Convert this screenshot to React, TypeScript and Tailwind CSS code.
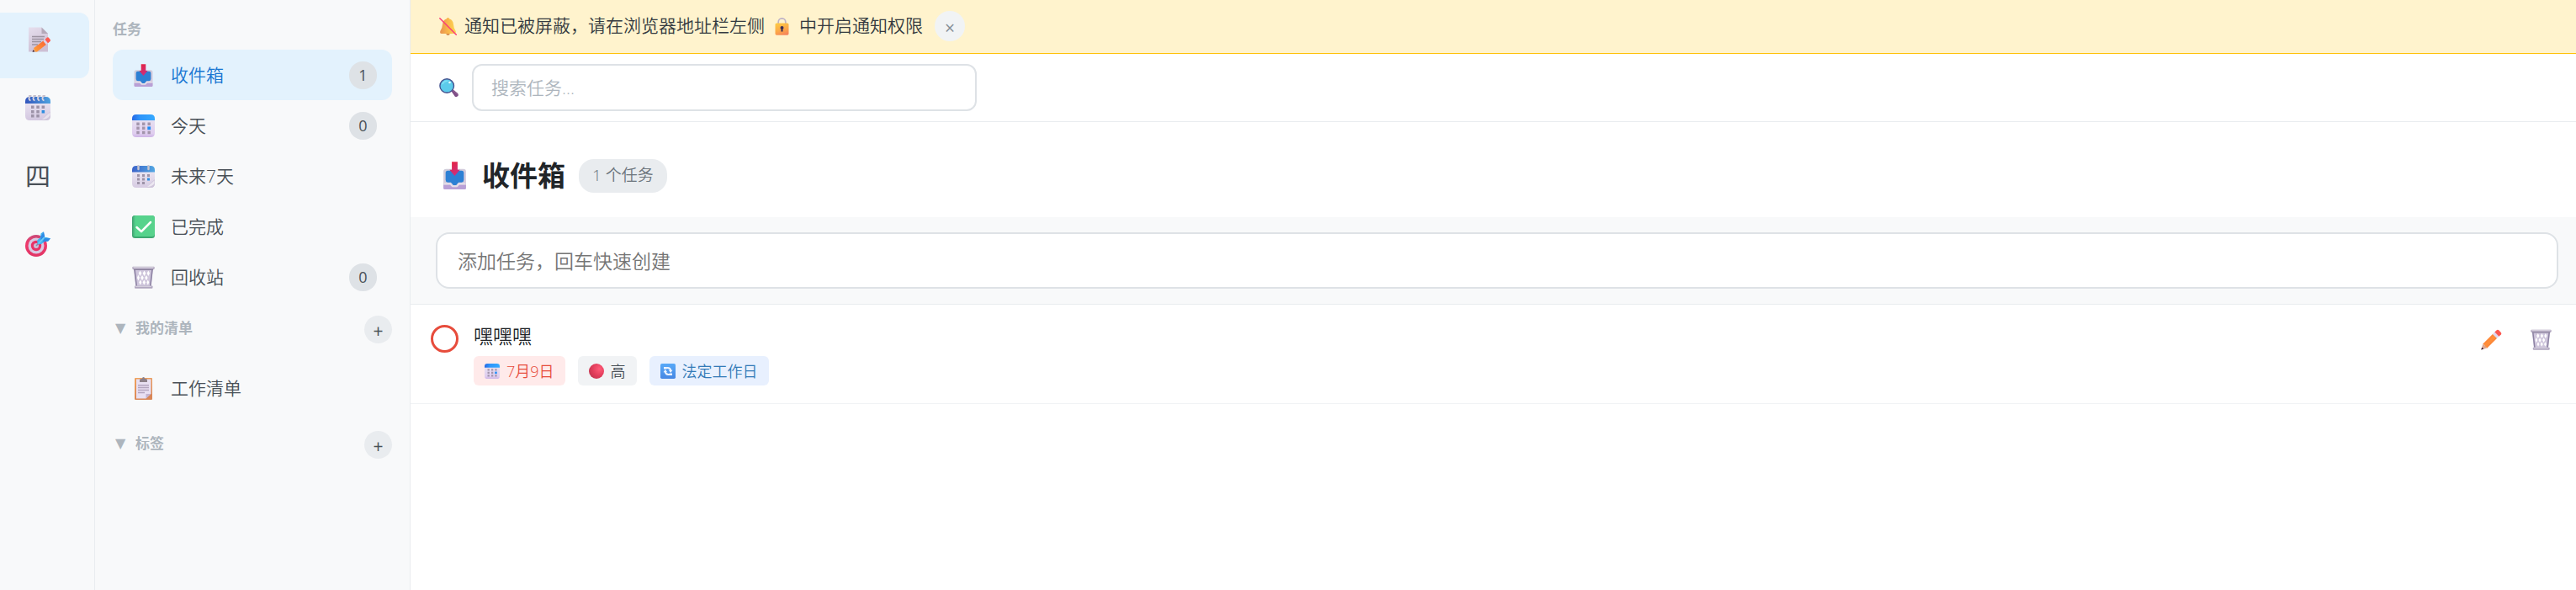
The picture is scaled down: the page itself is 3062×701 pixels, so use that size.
import clsx from "clsx";
import { useState } from "react";

type IconProps = { className?: string };

const MemoIcon = ({ className }: IconProps) => (
  <svg viewBox="0 0 30 30" className={className} aria-hidden="true">
    <defs>
      <linearGradient id="memoPaper" x1="0" y1="0" x2="0.4" y2="1">
        <stop offset="0" stopColor="#e6dfee" />
        <stop offset="1" stopColor="#cdbfd4" />
      </linearGradient>
      <linearGradient id="memoPencil" x1="0" y1="1" x2="1" y2="0">
        <stop offset="0" stopColor="#ffa23a" />
        <stop offset="1" stopColor="#f96234" />
      </linearGradient>
    </defs>
    <path d="M4 .5h15.500l7.500 7.500v21.500H4z" fill="url(#memoPaper)" />
    <path d="M19.500.5 27 8h-7.500z" fill="#b4a9b9" />
    <path
      d="M8 11.500h15M8 14.500h14M8 17.500h11M8 21h7"
      stroke="#9c93a1"
      strokeWidth="1.300"
    />
    <path d="m9 29.500 1.500-5 4 4.800z" fill="#e9b08c" />
    <path d="m8.500 29.700.8-2.400 2.200 2z" fill="#3a2a3c" />
    <path d="m10.200 25 11.600-8.700 3.400 4.400-11.200 8.800h-2z" fill="url(#memoPencil)" />
    <path d="m21.300 16.700 2.300-1.700 3.400 4.300-2.200 1.800z" fill="#dcd3e8" />
    <path
      d="m23.500 15 2.200-2.300q1.500-1 2.800.7l1.200 1.600q.8 1.500-.6 2.500L27 19.300z"
      fill="#ff5a4f"
    />
  </svg>
);

const SpiralCalendarIcon = ({ className }: IconProps) => (
  <svg viewBox="0 0 30 30" className={className} aria-hidden="true">
    <defs>
      <linearGradient id="spiralTop" x1="0" y1="0" x2="1" y2="0">
        <stop offset="0" stopColor="#3356bd" />
        <stop offset="1" stopColor="#4fa3e0" />
      </linearGradient>
      <linearGradient id="spiralPage" x1="0" y1="0" x2="0" y2="1">
        <stop offset="0" stopColor="#e9e3f1" />
        <stop offset="1" stopColor="#d3c7e0" />
      </linearGradient>
    </defs>
    <path d="M0 8h30v16.500q0 5.500-5.500 5.500h-19Q0 30 0 24.500z" fill="url(#spiralPage)" />
    <path d="M0 10V7.500Q0 2 5.500 2h19Q30 2 30 7.500V10z" fill="url(#spiralTop)" />
    <path
      d="M6.500 6.500C3.500 5.500 4 1 7 1M11.500 6.500C8.500 5.500 9 1 12 1M17 6.500C14 5.500 14.500 1 17.500 1M22.500 6.500C19.500 5.500 20 1 23 1"
      fill="none"
      stroke="#d9d3df"
      strokeWidth="1.800"
    />
    <path d="M4 .8h22" stroke="#bdb7c4" strokeWidth="1.200" strokeDasharray="3.500 2" />
    <path
      d="M7 12.500h3.500V16H7zM13.300 12.500h3.500V16h-3.500zM19.600 12.500h3.500V16h-3.500zM7 18h3.500v3.500H7zM13.300 18h3.500v3.500h-3.500zM7 23h3.500v3.500H7zM13.300 23h3.500v3.500h-3.500z"
      fill="#9d93a8"
    />
    <path d="M19.600 18h3.500v3.500h-3.500z" fill="#2f8de0" />
    <path d="M30 19.500v5q0 5.500-5.500 5.500H19q2.500-1 3.500-4z" fill="#cfc5da" />
    <path d="m20 29 9.500-8.500V24q-3 5-9.500 5z" fill="#e8e2ee" />
  </svg>
);

const TearCalendarIcon = ({ className }: IconProps) => (
  <svg viewBox="0 0 27 27" className={className} aria-hidden="true">
    <defs>
      <linearGradient id="tearTop" x1="0" y1="0" x2="1" y2="0">
        <stop offset="0" stopColor="#3b62c8" />
        <stop offset="1" stopColor="#52a7e2" />
      </linearGradient>
      <linearGradient id="tearPage" x1="0" y1="0" x2="0" y2="1">
        <stop offset="0" stopColor="#ebe6f2" />
        <stop offset="1" stopColor="#d6cbe2" />
      </linearGradient>
    </defs>
    <path d="M0 7h27v15q0 5-5 5H5q-5 0-5-5z" fill="url(#tearPage)" />
    <path d="M0 8.500V6q0-5 5-5h17q5 0 5 5v2.500z" fill="url(#tearTop)" />
    <path d="M7.500 1v4M19.500 1v4" stroke="#c9c6cf" strokeWidth="2.400" strokeLinecap="round" />
    <path
      d="M6 11h3v3H6zM12 11h3v3h-3zM18 11h3v3h-3zM6 15.500h3v3H6zM12 15.500h3v3h-3zM6 20h3v3H6zM12 20h3v3h-3z"
      fill="#9d93a8"
    />
    <path d="M18 15.500h3v3h-3z" fill="#2f8de0" />
    <path d="M27 17v5q0 5-5 5h-5q2.500-1 3.500-4z" fill="#cfc5da" />
    <path d="m18 26 8.500-7.500V22q-3 4-8.500 4z" fill="#ece7f1" />
  </svg>
);

const CalendarIcon = ({ className }: IconProps) => (
  <svg viewBox="0 0 27 27" className={className} aria-hidden="true">
    <defs>
      <linearGradient id="calTop" x1="0" y1="0" x2="1" y2="0">
        <stop offset="0" stopColor="#2668e4" />
        <stop offset="0.350" stopColor="#2e95fa" />
        <stop offset="1" stopColor="#35a9ff" />
      </linearGradient>
      <linearGradient id="calPage" x1="0" y1="0" x2="0" y2="1">
        <stop offset="0" stopColor="#e7e0f0" />
        <stop offset="0.800" stopColor="#dfcdef" />
        <stop offset="1" stopColor="#cdb3e6" />
      </linearGradient>
    </defs>
    <path d="M0 6h27v16q0 5-5 5H5q-5 0-5-5z" fill="url(#calPage)" />
    <path d="M0 7V5q0-5 5-5h17q5 0 5 5v2z" fill="url(#calTop)" />
    <path
      d="M5.300 9.500h3.400v3.400H5.300zM12 9.500h3.400v3.400H12zM18.500 9.500h3.400v3.400h-3.400zM5.300 14.500h3.400v3.400H5.300zM12 14.500h3.400v3.400H12zM5.300 19.800h3.400v3.400H5.300zM12 19.800h3.400v3.400H12zM18.500 19.800h3.400v3.400h-3.400z"
      fill="#a294ab"
    />
    <path d="M18.300 14.400h3.800v3.800h-3.800z" fill="#1f8cf5" />
  </svg>
);

const TargetIcon = ({ className }: IconProps) => (
  <svg viewBox="0 0 30 30" className={className} aria-hidden="true">
    <defs>
      <linearGradient id="targetRing" x1="0" y1="0" x2="0" y2="1">
        <stop offset="0" stopColor="#c94a78" />
        <stop offset="0.400" stopColor="#f03a6c" />
        <stop offset="1" stopColor="#e03565" />
      </linearGradient>
    </defs>
    <circle cx="13" cy="17" r="13" fill="url(#targetRing)" />
    <circle cx="13" cy="17" r="9.500" fill="#d9c9e2" />
    <circle cx="13" cy="17" r="6.200" fill="#e83266" />
    <circle cx="13" cy="17" r="3" fill="#c9bfd8" />
    <path d="m13 17 8-8" stroke="#8c84a5" strokeWidth="1.500" />
    <path
      d="m14.500 15.500-.3-5L18 7l.5-4.500L21.500.3l1 4.200.5 2.200 2.500.3 4.500 1.200-2.300 3-4.500.8-4 3z"
      fill="#45b3ee"
    />
    <path d="M18.200 6.800 22 .3l1.200 5.500-4.500 5zM23 8l7 .2-3 3.600-6.500.5z" fill="#2d8be6" />
    <path d="m15.500 14.500 7-7.300" stroke="#6ccaf7" strokeWidth="1.600" />
  </svg>
);

const InboxTrayIcon = ({ className }: IconProps) => (
  <svg viewBox="0 0 32 32" className={className} aria-hidden="true">
    <defs>
      <linearGradient id="trayArrow" x1="0" y1="0" x2="0.600" y2="1">
        <stop offset="0" stopColor="#e8213a" />
        <stop offset="1" stopColor="#cc2f80" />
      </linearGradient>
      <linearGradient id="trayBody" x1="0" y1="0" x2="1" y2="1">
        <stop offset="0" stopColor="#cfcdda" />
        <stop offset="1" stopColor="#d5c8de" />
      </linearGradient>
    </defs>
    <path d="M6 8.500h20q3 0 3 3V30q0 2-2 2H5q-2 0-2-2V11.500q0-3 3-3z" fill="url(#trayBody)" />
    <path d="M3 27h8l2.500 2.500h5L21 27h8v3.500q0 1.500-1.500 1.500h-23Q3 32 3 30.500z" fill="#b9a0d6" />
    <path
      d="M8 10.500h16q2.500 0 2.500 2.500v8q0 2.500-2.500 3h-3.500l-1.500 1.500q-.5 2-3 2t-3-2L11.500 24H8q-2.500-.5-2.500-3v-8q0-2.500 2.500-2.500z"
      fill="#2d80d4"
    />
    <path d="M4 25.500h7l2.200 2.700h5.600l2.200-2.700h7" fill="none" stroke="#e5deea" strokeWidth="1.800" />
    <path d="M12.700.3h6.600v9.200H22L16 16.500 10 9.500h2.700z" fill="url(#trayArrow)" />
  </svg>
);

const CheckMarkIcon = ({ className }: IconProps) => (
  <svg viewBox="0 0 27 27" className={className} aria-hidden="true">
    <defs>
      <linearGradient id="checkFill" x1="0" y1="0" x2="1" y2="0">
        <stop offset="0" stopColor="#3f9d70" />
        <stop offset="0.150" stopColor="#55d38c" />
        <stop offset="1" stopColor="#58d28c" />
      </linearGradient>
    </defs>
    <rect width="27" height="27" rx="3.500" fill="#3ea871" />
    <rect width="27" height="25" rx="3.500" fill="url(#checkFill)" />
    <path d="m5.500 14 5.500 5.200L22 8" fill="none" stroke="#fff" strokeWidth="2.500" strokeLinecap="round" strokeLinejoin="round" />
  </svg>
);

const TrashIcon = ({ className }: IconProps) => (
  <svg viewBox="0 0 27 27" className={className} aria-hidden="true">
    <path d="M2 4h23l-2.300 20.500H4.300z" fill="#cfc6dc" />
    <path
      d="m9.500 5.500 1.800 3.200-1.800 3.200-1.800-3.200zM14.500 5.500l1.800 3.200-1.800 3.200-1.800-3.200zM19.300 5.500 21 8.700l-1.700 3.200-1.700-3.200zM7.200 10.500 9 14l-1.700 3.500L6 14zM12 11l1.800 3-1.800 3.200-1.800-3.200zM16.900 11l1.700 3-1.700 3.200-1.700-3.200zM9.800 16.500l1.500 3-1.500 3-1.600-3zM14.300 16.500l1.700 3-1.700 3-1.700-3zM18.800 16.500l1.500 3-1.500 3-1.500-3z"
      fill="#fff"
    />
    <path d="m3 4 2.300 20M24 4l-2.300 20" stroke="#8d83a3" strokeWidth="1.600" />
    <path d="M1 .8h25q1 .7.800 2L26 4.300H1L.2 2.800Q0 1.500 1 .8z" fill="#b5abc2" />
    <path d="M1.500 1.500h24" stroke="#d8d3df" strokeWidth="1.200" />
    <path d="M2 4.500h23" stroke="#857b97" strokeWidth="1" />
    <rect x="3" y="23.500" width="21.500" height="3.200" rx="1" fill="#b0a6bf" />
    <path d="M4 24.300h19" stroke="#ded9e4" strokeWidth="1" />
  </svg>
);

const ClipboardIcon = ({ className }: IconProps) => (
  <svg viewBox="0 0 27 27" className={className} aria-hidden="true">
    <defs>
      <linearGradient id="clipBoard" x1="0" y1="0" x2="0.300" y2="1">
        <stop offset="0" stopColor="#f0a35e" />
        <stop offset="1" stopColor="#d98656" />
      </linearGradient>
    </defs>
    <rect x="3" y="1" width="21" height="26" rx="1" fill="url(#clipBoard)" />
    <path d="M5 2.500h17.500v17l-6 6H5z" fill="#e8dff2" />
    <path d="M16.500 20h6l-6 5.500z" fill="#c3b3cf" />
    <path d="M7 9.800h13M7 12.500h13M7 15.500h13M7 18.500h8" stroke="#b3a5bf" strokeWidth="1.400" />
    <path d="M9 6V3.500Q9 2 11 2h1q0-2 1.600-2T15 2h1q2 0 2 1.500V6z" fill="#8c8089" />
  </svg>
);

const BellOffIcon = ({ className }: IconProps) => (
  <svg viewBox="0 0 21 21" className={className} aria-hidden="true">
    <defs>
      <linearGradient id="bellFill" x1="0" y1="0" x2="1" y2="0">
        <stop offset="0" stopColor="#e8924f" />
        <stop offset="0.500" stopColor="#f9b64a" />
        <stop offset="1" stopColor="#fdd755" />
      </linearGradient>
    </defs>
    <circle cx="10.500" cy="18.800" r="2.200" fill="#d58a4c" />
    <path
      d="M10.500 0q1.600 0 1.800 1.500 4.200 1.200 4.700 6.500.2 4.500 2.700 8 .8 3-1.700 3H3q-2.500 0-1.700-3Q3.800 12.500 4 8q.5-5.300 4.700-6.500Q8.900 0 10.500 0z"
      fill="url(#bellFill)"
    />
    <path d="M.8.8 20.300 20.300" stroke="#fb3d78" strokeWidth="1.500" strokeLinecap="round" />
  </svg>
);

const LockIcon = ({ className }: IconProps) => (
  <svg viewBox="0 0 21 21" className={className} aria-hidden="true">
    <defs>
      <linearGradient id="lockFill" x1="0.300" y1="0" x2="0.700" y2="1">
        <stop offset="0" stopColor="#fdc845" />
        <stop offset="0.600" stopColor="#fca549" />
        <stop offset="1" stopColor="#f5835c" />
      </linearGradient>
    </defs>
    <path d="M6.200 8V5.200a4.300 4.300 0 0 1 8.600 0V8" fill="none" stroke="#bdb0c6" strokeWidth="1.700" />
    <rect x="2.500" y="6.500" width="16" height="14.200" rx="1.600" fill="url(#lockFill)" />
    <circle cx="10.500" cy="12" r="2" fill="#3c2d52" />
    <path d="M9.700 12h1.600l.3 4.500H9.400z" fill="#3c2d52" />
  </svg>
);

const SearchIcon = ({ className }: IconProps) => (
  <svg viewBox="0 0 23 23" className={className} aria-hidden="true">
    <path d="m13.500 14 2-1.600 6.500 5.300q1.500 1.800.3 3.400-1.500 1.700-3.500.7z" fill="#7e4e86" />
    <path d="m14 14.300 1-1 7 6" fill="none" stroke="#9a6b9b" strokeWidth="0.800" />
    <circle cx="9.200" cy="9" r="8.300" fill="#5ccbeb" stroke="#45538f" strokeWidth="1.400" />
    <path d="M4 6.500Q6 3 9.500 3.200" fill="none" stroke="#7fe0f5" strokeWidth="1.600" strokeLinecap="round" />
    <circle cx="12.500" cy="5" r="1.300" fill="#e4fbff" />
  </svg>
);

const RedCircleIcon = ({ className }: IconProps) => (
  <svg viewBox="0 0 18 18" className={className} aria-hidden="true">
    <defs>
      <radialGradient id="redBall" cx="0.700" cy="0.350" r="0.800">
        <stop offset="0" stopColor="#ff5a78" />
        <stop offset="0.600" stopColor="#e03c5a" />
        <stop offset="1" stopColor="#c03550" />
      </radialGradient>
    </defs>
    <circle cx="9" cy="9" r="9" fill="url(#redBall)" />
  </svg>
);

const RepeatIcon = ({ className }: IconProps) => (
  <svg viewBox="0 0 18 18" className={className} aria-hidden="true">
    <defs>
      <linearGradient id="repeatFill" x1="0" y1="0" x2="0" y2="1">
        <stop offset="0" stopColor="#58a9f8" />
        <stop offset="1" stopColor="#4787e3" />
      </linearGradient>
    </defs>
    <rect width="18" height="18" rx="1.800" fill="url(#repeatFill)" />
    <path
      d="M7 5.200q4.500-1 5.500 3.300M11 12.800q-4.500 1-5.500-3.300"
      fill="none"
      stroke="#eef4ff"
      strokeWidth="1.800"
    />
    <path d="M14.500 7.800 12.200 11 9.800 7.800zM3.500 10.200 5.800 7l2.400 3.200zM4 4h3.500v2.500H4zM10.500 11.500H14V14h-3.500z" fill="#eef4ff" />
  </svg>
);

const PencilIcon = ({ className }: IconProps) => (
  <svg viewBox="0 0 26 26" className={className} aria-hidden="true">
    <defs>
      <linearGradient id="pencilBody" x1="0" y1="0" x2="1" y2="1">
        <stop offset="0" stopColor="#f9702f" />
        <stop offset="0.500" stopColor="#ff8f3a" />
        <stop offset="1" stopColor="#ec7038" />
      </linearGradient>
    </defs>
    <path d="m.3 25.500 2.200-7.200 5.200 5.200z" fill="#dba793" />
    <path d="m.3 25.500.9-3 2.200 2.100z" fill="#3b2238" />
    <path d="M2.300 18.500 14.700 6l5.300 5.300L7.500 23.700q-1-2-2.500-2.500-.3-2-2.700-2.700z" fill="url(#pencilBody)" />
    <path d="m14.500 6.200 2.700-2.700 5.300 5.300-2.700 2.700z" fill="#dfd8ef" />
    <path d="m17 3.700 2.500-2.500q1.300-1 2.600.2l2.600 2.700q1.200 1.300.2 2.500L22.300 9z" fill="#fb5850" />
  </svg>
);

const railItems = [
  { key: "tasks", label: "任务", icon: <MemoIcon className="size-[30px]" /> },
  { key: "calendar", label: "日历", icon: <SpiralCalendarIcon className="size-[30px]" /> },
  { key: "matrix", label: "四象限", icon: "四" },
  { key: "focus", label: "专注", icon: <TargetIcon className="size-[30px]" /> },
];

const taskLists = [
  { key: "inbox", name: "收件箱", icon: <InboxTrayIcon className="size-[27px]" />, count: 1 },
  { key: "today", name: "今天", icon: <CalendarIcon className="size-[27px]" />, count: 0 },
  { key: "week", name: "未来7天", icon: <TearCalendarIcon className="size-[27px]" /> },
  { key: "done", name: "已完成", icon: <CheckMarkIcon className="size-[27px]" /> },
  { key: "trash", name: "回收站", icon: <TrashIcon className="size-[27px]" />, count: 0 },
];

type ListItemProps = {
  name: string;
  icon: React.ReactNode;
  count?: number;
  active?: boolean;
  onClick?: () => void;
};

const ListItem = ({ name, icon, count, active, onClick }: ListItemProps) => (
  <li>
    <button
      type="button"
      onClick={onClick}
      className={clsx(
        "flex h-[60px] w-full items-center gap-[19px] rounded-xl pr-[18px] pl-[23px] text-left text-[21px]",
        active ? "bg-[#e3f2fd] text-[#1976d2]" : "text-[#495057]",
      )}
    >
      {icon}
      <span className="flex-1 pt-0.5">{name}</span>
      {count !== undefined && (
        <span className="flex h-[33px] min-w-[33px] items-center justify-center rounded-2xl bg-[#dee2e6] text-lg font-normal text-[#495057]">
          {count}
        </span>
      )}
    </button>
  </li>
);

type SectionProps = {
  title: string;
  children?: React.ReactNode;
};

const Section = ({ title, children }: SectionProps) => {
  const [open, setOpen] = useState(true);

  return (
    <section>
      <div className="flex h-[33px] items-center justify-between">
        <button
          type="button"
          onClick={() => setOpen(!open)}
          className="flex items-center pb-1 pl-[3px] text-[17px] font-bold text-[#adb5bd]"
        >
          <span className="w-6 text-left font-['DejaVu_Sans'] text-base font-normal">
            {open ? "▼" : "▶"}
          </span>
          {title}
        </button>
        <button
          type="button"
          aria-label={`新建${title}`}
          className="flex size-[33px] items-center justify-center rounded-full bg-[#e9ecef] pt-1 text-[21px] leading-none font-normal text-[#495057]"
        >
          +
        </button>
      </div>
      {open && children}
    </section>
  );
};

const App = () => {
  const [view, setView] = useState("tasks");
  const [list, setList] = useState("inbox");
  const [notice, setNotice] = useState(true);

  return (
    <div className="flex min-h-screen bg-white font-['Open_Sans','Noto_Sans_CJK_SC',sans-serif] font-[350] text-[#212529]">
      <nav className="flex w-[113px] shrink-0 flex-col gap-[3px] border-r border-[#e9ecef] bg-[#f8f9fa] pt-[15px] pr-[6px]">
        {railItems.map((item) => (
          <button
            key={item.key}
            type="button"
            aria-label={item.label}
            onClick={() => setView(item.key)}
            className={clsx(
              "flex h-[78px] items-center justify-center rounded-r-xl pr-4 pb-3.5 text-[30px] leading-none font-normal text-[#495057]",
              view === item.key && "bg-[#e3f2fd]",
            )}
          >
            {item.icon}
          </button>
        ))}
      </nav>

      <aside className="w-[375px] shrink-0 border-r border-[#e9ecef] bg-[#f8f9fa] px-[21px] pt-[23px]">
        <h2 className="mb-3 text-[17px] leading-6 font-bold text-[#adb5bd]">任务</h2>
        <ul className="mb-4">
          {taskLists.map((item) => (
            <ListItem
              key={item.key}
              name={item.name}
              icon={item.icon}
              count={item.count}
              active={list === item.key}
              onClick={() => setList(item.key)}
            />
          ))}
        </ul>
        <Section title="我的清单">
          <ul className="mt-[23px] mb-[21px]">
            <ListItem name="工作清单" icon={<ClipboardIcon className="size-[27px]" />} />
          </ul>
        </Section>
        <Section title="标签" />
      </aside>

      <main className="min-w-0 flex-1">
        {notice && (
          <div className="flex h-16 items-center border-b border-[#ffc107] bg-[#fff3cd] px-[34px] pb-px text-[21px] text-[#343a40]">
            <BellOffIcon className="mr-[9px] size-[21px]" />
            <span>通知已被屏蔽，请在浏览器地址栏左侧</span>
            <LockIcon className="mx-2.5 size-[21px]" />
            <span>中开启通知权限</span>
            <button
              type="button"
              aria-label="关闭"
              onClick={() => setNotice(false)}
              className="ml-[14px] flex size-9 items-center justify-center rounded-full bg-[#f1f3f5] pt-1 text-[21px] leading-none font-normal text-[#868e96]"
            >
              ×
            </button>
          </div>
        )}

        <div className="flex items-center gap-4 border-b border-[#e9ecef] px-[34px] py-3">
          <label htmlFor="search" aria-label="搜索任务">
            <SearchIcon className="size-[23px]" />
          </label>
          <input
            id="search"
            type="text"
            placeholder="搜索任务..."
            className="h-14 w-[600px] rounded-xl border-2 border-[#dee2e6] px-[21px] text-[21px] outline-none placeholder:text-[#adb5bd]"
          />
        </div>

        <header className="flex h-[113px] items-center px-[36px] pt-[14px]">
          <InboxTrayIcon className="mr-4 size-[33px]" />
          <h1 className="mr-4 text-[33px] font-bold">收件箱</h1>
          <span className="flex h-10 items-center rounded-[18px] bg-[#e9ecef] px-4 text-[19px] text-[#6c757d]">
            1 个任务
          </span>
        </header>

        <div className="border-b border-[#e9ecef] bg-[#f8f9fa] pt-[18px] pr-[21px] pb-[18px] pl-[30px]">
          <input
            type="text"
            aria-label="添加任务"
            placeholder="添加任务，回车快速创建"
            className="block h-[67px] w-full rounded-2xl border-2 border-[#dee2e6] bg-white px-6 text-[23px] outline-none placeholder:text-[#757575]"
          />
        </div>

        <ul>
          <li className="flex items-start border-b border-[#f1f3f5] py-[21px] pr-[29px] pl-6">
            <input
              id="task-1"
              type="checkbox"
              className="mt-[3px] mr-[18px] size-[33px] shrink-0 appearance-none rounded-full border-3 border-[#e74c3c] bg-white checked:bg-[#e74c3c]"
            />
            <div className="flex-1">
              <label htmlFor="task-1" className="block h-10 text-[23px] leading-8">
                嘿嘿嘿
              </label>
              <div className="flex gap-[15px] text-lg">
                <span className="flex h-[35px] items-center gap-2 rounded-md bg-[#ffeaea] px-[13px] text-[#e74c3c]">
                  <CalendarIcon className="size-[18px]" />
                  7月9日
                </span>
                <span className="flex h-[35px] items-center gap-2 rounded-md bg-[#f1f3f5] px-[13px] text-[#495057]">
                  <RedCircleIcon className="size-[18px]" />高
                </span>
                <span className="flex h-[35px] items-center gap-2 rounded-md bg-[#e8f0fe] px-[13px] text-[#337ab7]">
                  <RepeatIcon className="size-[18px]" />
                  法定工作日
                </span>
              </div>
            </div>
            <div className="flex gap-[34px] pt-2">
              <button type="button" aria-label="编辑">
                <PencilIcon className="size-[25px]" />
              </button>
              <button type="button" aria-label="删除">
                <TrashIcon className="size-[25px]" />
              </button>
            </div>
          </li>
        </ul>
      </main>
    </div>
  );
};

export default App;
